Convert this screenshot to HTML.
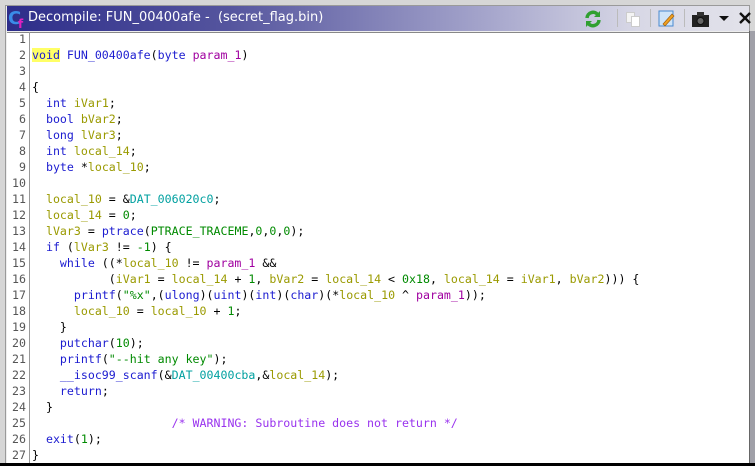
<!DOCTYPE html>
<html><head><meta charset="utf-8"><style>
*{margin:0;padding:0;box-sizing:border-box}
body{width:755px;height:466px;background:#d6d6d6;position:relative;overflow:hidden;font-family:"DejaVu Sans Mono","Liberation Mono",monospace}
#frame{position:absolute;left:5px;top:5px;width:745px;height:459px;border:1px solid #9a9a9a;background:#eee}
#title{position:absolute;left:7px;top:6px;width:742px;height:25px;background:linear-gradient(90deg,#2d2d8a 0%,#55559e 30%,#a6a6cc 65%,#d8d8e6 85%,#e2e2ea 100%)}
#title .t{position:absolute;left:21px;top:4px;color:#fff;font-family:"DejaVu Sans",sans-serif;font-size:13px;white-space:pre}
#content{position:absolute;left:7px;top:32px;width:742px;height:431px;background:#fff;border-top:1px solid #888}
#gut{position:absolute;left:29px;top:32px;width:1px;height:431px;background:#999}
#rb{position:absolute;left:749px;top:31px;width:6px;height:435px;background:#a0a0a8;border-left:1px solid #666}
#bb{position:absolute;left:0;top:463px;width:755px;height:3px;background:#000}
.code{position:absolute;left:32px;top:31px;font-size:11.6px;line-height:16px;white-space:pre;color:#000}
.ln{position:absolute;left:8px;width:18px;text-align:right;color:#555;font-size:11.6px;line-height:16px;top:31px;white-space:pre}
.k{color:#1c1cd0}.f{color:#1c1cd0}.v{color:#9a9a00}.p{color:#a000a0}.n{color:#008a00}.d{color:#00a0a0}.c{color:#9933ee}.s{color:#008a00}
.hl{background:#ffff66}
</style></head><body>
<div id="frame"></div>
<div id="title">
<svg style="position:absolute;left:1px;top:2px" width="19" height="21"><text x="0" y="16" font-family="DejaVu Sans" font-weight="bold" font-size="18" fill="#3a8ce8">C</text><text x="10" y="20" font-family="DejaVu Sans" font-weight="bold" font-size="12" fill="#e020c0">f</text></svg>
<span class="t">Decompile: FUN_00400afe -  (secret_flag.bin)</span>
<svg style="position:absolute;left:576px;top:3px" width="20" height="20"><path d="M4 9a6 6 0 0 1 11-3" stroke="#30a030" stroke-width="3.5" fill="none"/><path d="M16 11a6 6 0 0 1-11 3" stroke="#30a030" stroke-width="3.5" fill="none"/><path d="M17 2v6h-6z" fill="#30a030"/><path d="M3 18v-6h6z" fill="#30a030"/></svg>
<div style="position:absolute;left:610px;top:3px;width:1px;height:18px;background:#bbb"></div>
<div style="position:absolute;left:619px;top:6px;width:9px;height:11px;background:#f4f4f4;border:1px solid #ccc"></div>
<div style="position:absolute;left:624px;top:10px;width:9px;height:11px;background:#fff;border:1px solid #ccc"></div>
<div style="position:absolute;left:643px;top:3px;width:1px;height:18px;background:#bbb"></div>
<svg style="position:absolute;left:651px;top:3px" width="18" height="20"><rect x="1" y="2" width="14" height="15" fill="#cfe4f8" stroke="#4a8ad0"/><path d="M5 15l9-10 2 2-9 10z" fill="#f0a020" stroke="#a06010" stroke-width=".7"/></svg>
<div style="position:absolute;left:677px;top:3px;width:1px;height:18px;background:#bbb"></div>
<svg style="position:absolute;left:684px;top:4px" width="20" height="18"><rect x="1" y="5" width="17" height="12" fill="#222"/><rect x="6" y="2" width="7" height="4" fill="#333"/><circle cx="9.5" cy="11" r="3.5" fill="#666" stroke="#111"/></svg>
<svg style="position:absolute;left:711px;top:9px" width="12" height="8"><path d="M1 1h10l-5 5z" fill="#111"/></svg>
<svg style="position:absolute;left:732px;top:6px" width="12" height="12"><path d="M1 1l10 10M11 1L1 11" stroke="#111" stroke-width="2.4"/></svg>
</div>
<div id="content"></div>
<div id="gut"></div>
<div id="rb"></div>
<div id="bb"></div>
<div class="ln">1
2
3
4
5
6
7
8
9
10
11
12
13
14
15
16
17
18
19
20
21
22
23
24
25
26
27</div>
<div class="code">
<span class="k hl">void</span> <span class="f">FUN_00400afe</span>(<span class="k">byte</span> <span class="p">param_1</span>)

{
  <span class="k">int</span> <span class="v">iVar1</span>;
  <span class="k">bool</span> <span class="v">bVar2</span>;
  <span class="k">long</span> <span class="v">lVar3</span>;
  <span class="k">int</span> <span class="v">local_14</span>;
  <span class="k">byte</span> *<span class="v">local_10</span>;

  <span class="v">local_10</span> = &amp;<span class="d">DAT_006020c0</span>;
  <span class="v">local_14</span> = <span class="n">0</span>;
  <span class="v">lVar3</span> = <span class="f">ptrace</span>(<span class="n">PTRACE_TRACEME</span>,<span class="n">0</span>,<span class="n">0</span>,<span class="n">0</span>);
  <span class="k">if</span> (<span class="v">lVar3</span> != <span class="n">-1</span>) {
    <span class="k">while</span> ((*<span class="v">local_10</span> != <span class="p">param_1</span> &amp;&amp;
           (<span class="v">iVar1</span> = <span class="v">local_14</span> + <span class="n">1</span>, <span class="v">bVar2</span> = <span class="v">local_14</span> &lt; <span class="n">0x18</span>, <span class="v">local_14</span> = <span class="v">iVar1</span>, <span class="v">bVar2</span>))) {
      <span class="f">printf</span>(<span class="s">"%x"</span>,(<span class="k">ulong</span>)(<span class="k">uint</span>)(<span class="k">int</span>)(<span class="k">char</span>)(*<span class="v">local_10</span> ^ <span class="p">param_1</span>));
      <span class="v">local_10</span> = <span class="v">local_10</span> + <span class="n">1</span>;
    }
    <span class="f">putchar</span>(<span class="n">10</span>);
    <span class="f">printf</span>(<span class="s">"--hit any key"</span>);
    <span class="f">__isoc99_scanf</span>(&amp;<span class="d">DAT_00400cba</span>,&amp;<span class="v">local_14</span>);
    <span class="k">return</span>;
  }
                    <span class="c">/* WARNING: Subroutine does not return */</span>
  <span class="f">exit</span>(<span class="n">1</span>);
}</div>
</body></html>
